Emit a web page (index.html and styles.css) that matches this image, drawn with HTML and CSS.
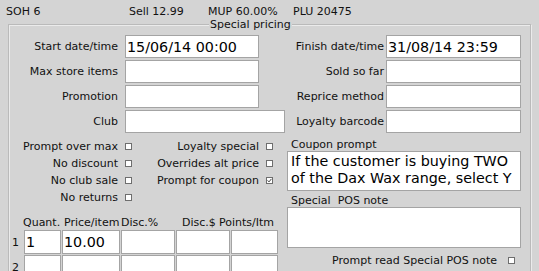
FILE: index.html
```html
<!DOCTYPE html>
<html lang="en">
<head>
  <meta charset="UTF-8">
  <meta name="viewport" content="width=device-width, initial-scale=1.0">
  <title>Special pricing</title>
  <link rel="stylesheet" href="styles.css">
</head>
<body>
  <div class="summary">
    <span>SOH 6</span>
    <span>Sell 12.99</span>
    <span>MUP 60.00%</span>
    <span>PLU 20475</span>
  </div>

  <fieldset class="pricing">
    <legend>Special pricing</legend>

    <div class="fields">
      <label>Start date/time</label>
      <input class="field" value="15/06/14 00:00">
      <label class="right">Finish date/time</label>
      <input class="field right" value="31/08/14 23:59">

      <label>Max store items</label>
      <input class="field" value="">
      <label class="right">Sold so far</label>
      <input class="field right" value="">

      <label>Promotion</label>
      <input class="field" value="">
      <label class="right">Reprice method</label>
      <input class="field right" value="">

      <label>Club</label>
      <input class="field wide" value="">
      <label class="right">Loyalty barcode</label>
      <input class="field right" value="">
    </div>

    <div class="lower">
      <div class="left">
        <div class="checks">
          <label>Prompt over max</label><span class="box"></span>
          <label>Loyalty special</label><span class="box"></span>
          <label>No discount</label><span class="box"></span>
          <label>Overrides alt price</label><span class="box"></span>
          <label>No club sale</label><span class="box"></span>
          <label>Prompt for coupon</label>
          <span class="box"><svg width="5" height="5" viewBox="0 0 5 5"><path d="M0.6 2.4 L2 3.9 L4.4 0.9" fill="none" stroke="#444" stroke-width="1"/></svg></span>
          <label>No returns</label><span class="box"></span>
        </div>

        <!-- price breaks -->
        <div class="items-head">
          <span></span>
          <span>Quant.</span>
          <span>Price/item</span>
          <span>Disc.%</span>
          <span>Disc.$</span>
          <span>Points/Itm</span>
        </div>
        <div class="items">
          <span class="row-no">1</span>
          <input class="cell" value="1">
          <input class="cell" value="10.00">
          <input class="cell" value="">
          <input class="cell" value="">
          <input class="cell" value="">

          <span class="row-no">2</span>
          <input class="cell" value="">
          <input class="cell" value="">
          <input class="cell" value="">
          <input class="cell" value="">
          <input class="cell" value="">
        </div>
      </div>

      <div class="notes">
        <div class="caption">Coupon prompt</div>
        <textarea class="memo">If the customer is buying TWO of the Dax Wax range, select Y</textarea>
        <div class="caption gap">Special&nbsp; POS note</div>
        <textarea class="memo tall"></textarea>
        <div class="prompt-row">
          <label>Prompt read Special POS note</label>
          <span class="box"></span>
        </div>
      </div>
    </div>
  </fieldset>
</body>
</html>
```

FILE: styles.css
```css
body {
  margin: 0;
  background-color: #d4d4d4;
  font-family: "DejaVu Sans", Verdana, sans-serif;
  font-size: 11px;
  line-height: 13px;
  color: #111;
  overflow: hidden;
}
.summary {
  display: grid;
  grid-template-columns: 123px 79px 85px auto;
  padding: 5px 0 0 6px;
  height: 13px;
}
.pricing {
  margin: 0 8px;
  padding: 4px 1px 0 1px;
  border: 1px solid #bababa;
  box-shadow: inset 1px 1px 0 #ebebeb, 1px 1px 0 #ebebeb;
  min-width: 0;
}
.pricing legend {
  margin-left: 199px;
  padding: 0 1px;
  line-height: 13px;
  background-color: #d4d4d4;
}
.fields {
  display: grid;
  grid-template-columns: 115px 134px 28px 99px 135px;
  grid-auto-rows: 23px;
  row-gap: 2px;
  align-items: center;
}
.fields label {
  grid-column: 1;
  text-align: right;
  padding-right: 7px;
}
.fields label.right {
  grid-column: 4;
  padding-right: 2px;
}
.field {
  grid-column: 2;
}
.field.right {
  grid-column: 5;
}
.field.wide {
  grid-column: 2 / 4;
  margin-right: 2px;
  width: auto;
}
.field, .cell, .memo {
  box-sizing: border-box;
  margin: 0;
  border: 1px solid #a4a4a4;
  background-color: #fff;
  color: #000;
  font-family: "DejaVu Sans", Verdana, sans-serif;
  font-size: 14.3px;
  outline: none;
}
.field, .cell {
  height: 23px;
  width: 100%;
  padding: 0 1px;
}
.cell {
  height: 24px;
}
.lower {
  display: grid;
  grid-template-columns: 277px 234px;
  margin-top: 5px;
}
.checks {
  display: grid;
  grid-template-columns: 111px 13px 128px 13px;
  grid-auto-rows: 17px;
  align-items: center;
}
.checks label {
  text-align: right;
  padding-right: 3px;
}
.box {
  display: block;
  box-sizing: border-box;
  width: 7px;
  height: 7px;
  margin-left: 4px;
  border: 1px solid #6e6e6e;
  background-color: #fff;
}
.box svg {
  display: block;
}
.items-head {
  display: grid;
  grid-template-columns: 13px 41px 57px 61px 37px auto;
  margin-top: 10px;
}
.items {
  display: grid;
  grid-template-columns: 13px 37px 58px 54px 54px 47px;
  grid-auto-rows: 24px;
  gap: 1px;
  margin-top: 1px;
}
.row-no {
  align-self: center;
  padding-left: 2px;
}
.notes {
  display: flex;
  flex-direction: column;
}
.caption {
  padding-left: 4px;
}
.caption.gap {
  margin-top: 3px;
}
.memo {
  height: 40px;
  padding: 1px 3px;
  line-height: 17px;
  resize: none;
  overflow: hidden;
}
.memo.tall {
  height: 41px;
}
.prompt-row {
  display: flex;
  justify-content: flex-end;
  align-items: center;
  margin-top: 6px;
  padding-right: 6px;
}
.prompt-row .box {
  margin-left: 11px;
}
```
